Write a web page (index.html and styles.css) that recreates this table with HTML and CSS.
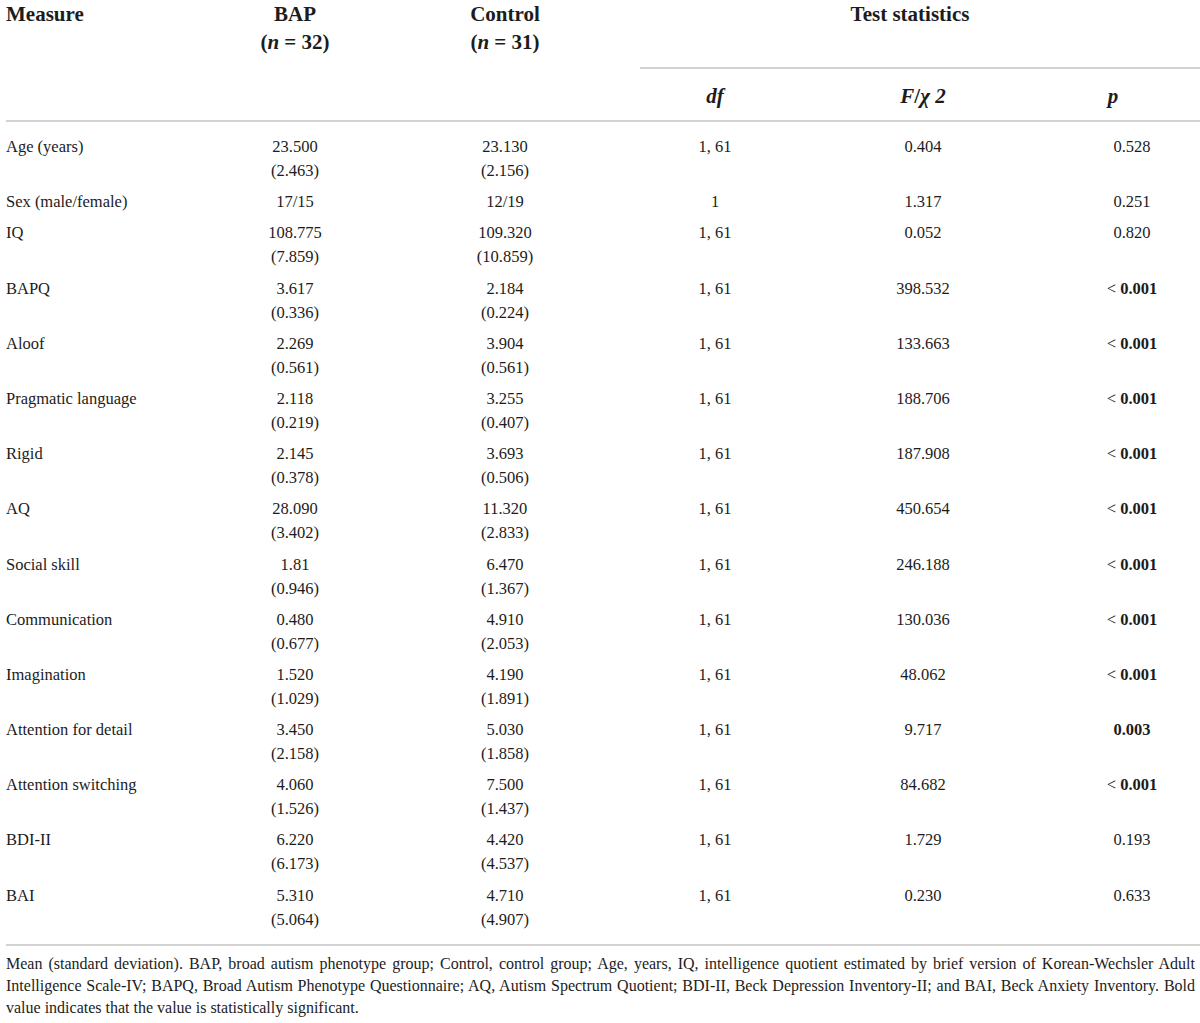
FILE: index.html
```html
<!DOCTYPE html>
<html lang="en">
<head>
    <meta charset="utf-8">
    <title>Participant characteristics</title>
    <link rel="stylesheet" href="styles.css">
</head>
<body>
    <table class="stats">
        <colgroup>
            <col class="col-measure">
            <col class="col-group">
            <col class="col-group">
            <col class="col-df">
            <col class="col-f">
            <col class="col-p">
        </colgroup>
        <thead>
            <tr class="head-top">
                <th rowspan="2" class="measure">Measure</th>
                <th rowspan="2">BAP<br>(<i>n</i> = 32)</th>
                <th rowspan="2">Control<br>(<i>n</i> = 31)</th>
                <th colspan="3" class="test-head"><div class="test-rule">Test statistics</div></th>
            </tr>
            <tr class="head-sub">
                <th><i>df</i></th>
                <th><i>F</i>/<i>χ 2</i></th>
                <th class="p-cell"><i>p</i></th>
            </tr>
        </thead>
        <tbody>
            <tr>
                <td class="measure">Age (years)</td>
                <td>23.500<br>(2.463)</td>
                <td>23.130<br>(2.156)</td>
                <td>1, 61</td>
                <td>0.404</td>
                <td class="p-cell">0.528</td>
            </tr>
            <tr>
                <td class="measure">Sex (male/female)</td>
                <td>17/15</td>
                <td>12/19</td>
                <td>1</td>
                <td>1.317</td>
                <td class="p-cell">0.251</td>
            </tr>
            <tr>
                <td class="measure">IQ</td>
                <td>108.775<br>(7.859)</td>
                <td>109.320<br>(10.859)</td>
                <td>1, 61</td>
                <td>0.052</td>
                <td class="p-cell">0.820</td>
            </tr>
            <tr>
                <td class="measure">BAPQ</td>
                <td>3.617<br>(0.336)</td>
                <td>2.184<br>(0.224)</td>
                <td>1, 61</td>
                <td>398.532</td>
                <td class="p-cell">&lt; <b>0.001</b></td>
            </tr>
            <tr>
                <td class="measure">Aloof</td>
                <td>2.269<br>(0.561)</td>
                <td>3.904<br>(0.561)</td>
                <td>1, 61</td>
                <td>133.663</td>
                <td class="p-cell">&lt; <b>0.001</b></td>
            </tr>
            <tr>
                <td class="measure">Pragmatic language</td>
                <td>2.118<br>(0.219)</td>
                <td>3.255<br>(0.407)</td>
                <td>1, 61</td>
                <td>188.706</td>
                <td class="p-cell">&lt; <b>0.001</b></td>
            </tr>
            <tr>
                <td class="measure">Rigid</td>
                <td>2.145<br>(0.378)</td>
                <td>3.693<br>(0.506)</td>
                <td>1, 61</td>
                <td>187.908</td>
                <td class="p-cell">&lt; <b>0.001</b></td>
            </tr>
            <tr>
                <td class="measure">AQ</td>
                <td>28.090<br>(3.402)</td>
                <td>11.320<br>(2.833)</td>
                <td>1, 61</td>
                <td>450.654</td>
                <td class="p-cell">&lt; <b>0.001</b></td>
            </tr>
            <tr>
                <td class="measure">Social skill</td>
                <td>1.81<br>(0.946)</td>
                <td>6.470<br>(1.367)</td>
                <td>1, 61</td>
                <td>246.188</td>
                <td class="p-cell">&lt; <b>0.001</b></td>
            </tr>
            <tr>
                <td class="measure">Communication</td>
                <td>0.480<br>(0.677)</td>
                <td>4.910<br>(2.053)</td>
                <td>1, 61</td>
                <td>130.036</td>
                <td class="p-cell">&lt; <b>0.001</b></td>
            </tr>
            <tr>
                <td class="measure">Imagination</td>
                <td>1.520<br>(1.029)</td>
                <td>4.190<br>(1.891)</td>
                <td>1, 61</td>
                <td>48.062</td>
                <td class="p-cell">&lt; <b>0.001</b></td>
            </tr>
            <tr>
                <td class="measure">Attention for detail</td>
                <td>3.450<br>(2.158)</td>
                <td>5.030<br>(1.858)</td>
                <td>1, 61</td>
                <td>9.717</td>
                <td class="p-cell"><b>0.003</b></td>
            </tr>
            <tr>
                <td class="measure">Attention switching</td>
                <td>4.060<br>(1.526)</td>
                <td>7.500<br>(1.437)</td>
                <td>1, 61</td>
                <td>84.682</td>
                <td class="p-cell">&lt; <b>0.001</b></td>
            </tr>
            <tr>
                <td class="measure">BDI-II</td>
                <td>6.220<br>(6.173)</td>
                <td>4.420<br>(4.537)</td>
                <td>1, 61</td>
                <td>1.729</td>
                <td class="p-cell">0.193</td>
            </tr>
            <tr>
                <td class="measure">BAI</td>
                <td>5.310<br>(5.064)</td>
                <td>4.710<br>(4.907)</td>
                <td>1, 61</td>
                <td>0.230</td>
                <td class="p-cell">0.633</td>
            </tr>
        </tbody>
    </table>
    <p class="footnote">Mean (standard deviation). BAP, broad autism phenotype group; Control, control group; Age, years, IQ, intelligence quotient estimated by brief version of Korean-Wechsler Adult Intelligence Scale-IV; BAPQ, Broad Autism Phenotype Questionnaire; AQ, Autism Spectrum Quotient; BDI-II, Beck Depression Inventory-II; and BAI, Beck Anxiety Inventory. Bold value indicates that the value is statistically significant.</p>
</body>
</html>
```

FILE: styles.css
```css
body {
    margin: 0 0 0 6px;
    background: #fff;
    color: #1c1c1c;
    font-family: 'Liberation Serif', 'Times New Roman', serif;
    overflow: hidden;
}

.stats {
    width: 1194px;
    table-layout: fixed;
    border-collapse: collapse;
    font-size: 16.5px;
}

.col-measure { width: 184px; }
.col-group { width: 210px; }
.col-df { width: 210px; }
.col-f { width: 206px; }
.col-p { width: 174px; }

.stats th {
    font-size: 21px;
    font-weight: bold;
    line-height: 28px;
    text-align: center;
    vertical-align: top;
    padding: 0;
}

.stats thead tr.head-sub th {
    padding: 13px 0 10px;
    border-bottom: 2px solid #d2d2d2;
}

.stats thead tr.head-top th[rowspan] {
    border-bottom: 2px solid #d2d2d2;
}

.stats .measure {
    text-align: left;
}

.test-head {
    padding-bottom: 0;
}

.test-rule {
    margin-left: 30px;
    margin-right: -40px;
    padding: 0 60px 39px 0;
    border-bottom: 2px solid #d2d2d2;
}

.stats td {
    line-height: 24px;
    padding: 3.6px 0;
    text-align: center;
    vertical-align: top;
}

.stats td.p-cell,
.stats th.p-cell {
    padding-left: 38px;
}

.stats tbody tr:first-child td {
    padding-top: 13px;
}

.stats tbody tr:last-child td {
    padding-bottom: 12px;
    border-bottom: 2px solid #d2d2d2;
}

.footnote {
    margin: 7px 5px 0 0;
    font-size: 16px;
    line-height: 22px;
    text-align: justify;
}
```
